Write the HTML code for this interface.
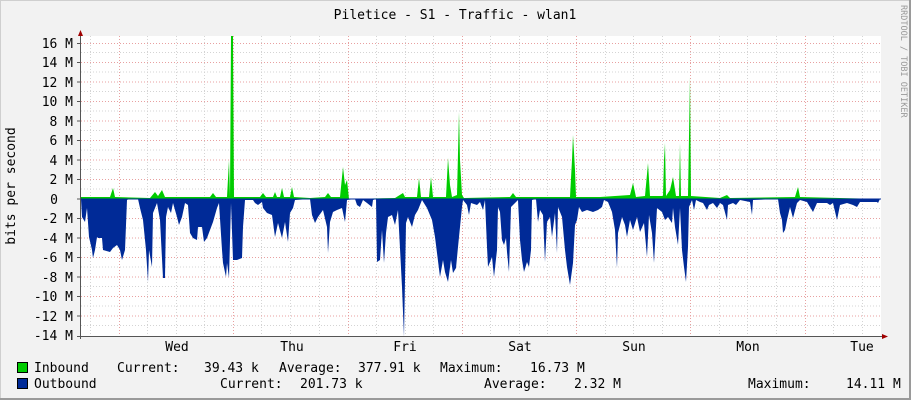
<!DOCTYPE html>
<html><head><meta charset="utf-8"><style>
html,body{margin:0;padding:0;background:#f2f2f2;}
svg{display:block;}
text{font-family:"DejaVu Sans Mono","Liberation Mono",monospace;fill:#000;}
</style></head><body>
<svg width="911" height="400" viewBox="0 0 911 400" xmlns="http://www.w3.org/2000/svg">
<rect x="0" y="0" width="911" height="400" fill="#f2f2f2"/>
<rect x="0.5" y="0.5" width="909" height="398" fill="none" stroke="#cfcfcf" stroke-width="1"/>
<line x1="910" y1="0" x2="910" y2="400" stroke="#9a9a9a" stroke-width="2"/>
<line x1="0" y1="399" x2="911" y2="399" stroke="#9a9a9a" stroke-width="2"/>
<rect x="81" y="36" width="800" height="300" fill="#fff"/>
<g stroke="#d4d4d4" stroke-width="1" stroke-dasharray="1,2">
<line x1="81" y1="52.5" x2="881" y2="52.5"/><line x1="81" y1="72" x2="881" y2="72"/><line x1="81" y1="91.5" x2="881" y2="91.5"/><line x1="81" y1="111" x2="881" y2="111"/><line x1="81" y1="130.5" x2="881" y2="130.5"/><line x1="81" y1="150" x2="881" y2="150"/><line x1="81" y1="169.5" x2="881" y2="169.5"/><line x1="81" y1="189" x2="881" y2="189"/><line x1="81" y1="208.5" x2="881" y2="208.5"/><line x1="81" y1="228" x2="881" y2="228"/><line x1="81" y1="247.5" x2="881" y2="247.5"/><line x1="81" y1="267" x2="881" y2="267"/><line x1="81" y1="286.5" x2="881" y2="286.5"/><line x1="81" y1="306" x2="881" y2="306"/><line x1="81" y1="325.5" x2="881" y2="325.5"/>
<line x1="90.5" y1="36" x2="90.5" y2="336"/><line x1="147.5" y1="36" x2="147.5" y2="336"/><line x1="176.5" y1="36" x2="176.5" y2="336"/><line x1="204.5" y1="36" x2="204.5" y2="336"/>
<line x1="261.5" y1="36" x2="261.5" y2="336"/><line x1="290.5" y1="36" x2="290.5" y2="336"/><line x1="319.5" y1="36" x2="319.5" y2="336"/>
<line x1="376.5" y1="36" x2="376.5" y2="336"/><line x1="405.5" y1="36" x2="405.5" y2="336"/><line x1="433.5" y1="36" x2="433.5" y2="336"/>
<line x1="490.5" y1="36" x2="490.5" y2="336"/><line x1="519.5" y1="36" x2="519.5" y2="336"/><line x1="547.5" y1="36" x2="547.5" y2="336"/>
<line x1="605.5" y1="36" x2="605.5" y2="336"/><line x1="633.5" y1="36" x2="633.5" y2="336"/><line x1="662.5" y1="36" x2="662.5" y2="336"/>
<line x1="719.5" y1="36" x2="719.5" y2="336"/><line x1="747.5" y1="36" x2="747.5" y2="336"/><line x1="776.5" y1="36" x2="776.5" y2="336"/>
<line x1="833.5" y1="36" x2="833.5" y2="336"/><line x1="862.5" y1="36" x2="862.5" y2="336"/>
</g>
<g stroke="#e8a0a0" stroke-width="1" stroke-dasharray="1,2">
<line x1="81" y1="43.5" x2="881" y2="43.5"/><line x1="81" y1="62.5" x2="881" y2="62.5"/><line x1="81" y1="82" x2="881" y2="82"/><line x1="81" y1="101.5" x2="881" y2="101.5"/><line x1="81" y1="121" x2="881" y2="121"/><line x1="81" y1="140.5" x2="881" y2="140.5"/><line x1="81" y1="160" x2="881" y2="160"/><line x1="81" y1="179.5" x2="881" y2="179.5"/><line x1="81" y1="218.5" x2="881" y2="218.5"/><line x1="81" y1="238" x2="881" y2="238"/><line x1="81" y1="257.5" x2="881" y2="257.5"/><line x1="81" y1="277" x2="881" y2="277"/><line x1="81" y1="296.5" x2="881" y2="296.5"/><line x1="81" y1="316" x2="881" y2="316"/>
<line x1="119.5" y1="36" x2="119.5" y2="336"/><line x1="233.5" y1="36" x2="233.5" y2="336"/><line x1="348.5" y1="36" x2="348.5" y2="336"/><line x1="462.5" y1="36" x2="462.5" y2="336"/><line x1="576.5" y1="36" x2="576.5" y2="336"/><line x1="690.5" y1="36" x2="690.5" y2="336"/><line x1="805.5" y1="36" x2="805.5" y2="336"/>
</g>
<polygon fill="#002a97" points="81,199 82,217 85,222 87,208 89,237 92,250 93,258 95,250 97,237 98,238 102,238 103,250 110,252 113,248 117,245 120,250 122,260 125,250 127,200 129,199 138,199 140,208 143,220 146,250 148,282 149,250 152,267 153,213 157,203 160,220 163,278 165,278 166,217 168,207 171,213 173,203 177,217 179,225 182,217 185,203 188,205 190,233 193,238 197,240 198,227 202,227 204,242 207,238 210,230 213,222 217,208 219,203 222,250 223,263 226,277 227,263 229,278 231,203 233,260 237,260 242,258 243,227 245,200 253,200 255,203 258,205 262,202 263,208 267,213 272,215 275,237 278,223 282,238 285,222 288,242 290,213 293,208 295,200 310,199 312,215 315,223 318,217 323,210 327,227 328,253 330,222 333,212 337,210 342,208 345,222 347,200 355,199 357,205 360,207 363,200 367,203 372,207 373,200 376,199 377,262 380,260 382,230 384,263 386,233 388,217 392,215 395,225 398,210 402,287 404,337 406,223 408,217 412,227 415,215 418,210 422,200 427,208 432,220 435,237 440,277 443,260 445,272 448,282 451,260 453,273 456,268 458,247 462,207 463,200 467,205 469,215 471,203 477,205 480,202 483,210 485,200 487,247 488,267 492,257 494,277 497,250 498,207 500,212 502,240 504,245 506,238 507,252 509,272 511,207 518,200 520,240 522,260 524,272 527,262 529,267 531,250 532,200 536,199 538,222 540,210 543,215 545,262 547,222 550,217 552,237 555,213 557,253 558,207 562,217 565,250 567,267 570,285 573,263 575,225 577,220 579,207 582,212 587,210 593,212 598,210 602,207 604,200 608,202 612,212 615,230 617,268 618,233 622,217 625,225 627,237 630,220 633,230 637,217 640,232 644,223 647,257 649,215 652,233 654,263 657,208 662,212 665,220 668,217 672,223 673,208 675,227 678,245 680,208 682,250 684,267 686,282 688,247 689,207 692,200 694,210 696,200 700,202 703,203 707,210 709,205 713,203 717,208 720,203 723,205 727,220 728,205 733,203 736,205 740,200 750,202 752,215 753,200 778,199 780,213 782,220 783,233 785,230 787,220 790,207 793,218 797,203 800,200 807,202 810,207 813,212 817,203 827,203 830,205 833,203 837,220 840,205 847,203 853,205 857,207 860,202 877,202 878,203 880,199"/>
<polygon fill="#00cc00" points="81,199 81,197 110,197 113,188 115,197 150,198 155,192 158,196 162,190 165,197 210,197 213,193 216,197 227,197 229,160 230,197 231,36 233,36 234,197 260,197 263,193 266,197 273,197 275,192 277,197 280,197 282,188 284,197 290,197 292,187 294,197 310,198 325,197 328,193 331,197 340,197 343,167 345,185 347,180 349,199 395,198 403,193 405,197 417,197 419,178 421,197 429,197 431,177 433,197 446,197 448,158 450,185 452,197 457,195 459,112 460,160 462,195 464,198 510,197 513,193 516,197 570,197 572,160 573,135 575,170 576,197 600,197 630,195 633,183 636,197 645,196 648,163 650,196 663,196 664,160 665,143 666,196 670,190 673,177 676,196 679,196 680,143 681,196 688,196 690,77 691,196 720,198 727,195 730,198 795,197 798,187 800,197 880,199"/>
<line x1="81" y1="199" x2="881" y2="199" stroke="#002a97" stroke-width="1"/>
<line x1="80.5" y1="32" x2="80.5" y2="339" stroke="#555" stroke-width="1"/>
<line x1="77" y1="336.5" x2="885" y2="336.5" stroke="#555" stroke-width="1"/>
<polygon points="78,36 83,36 80.5,30" fill="#a00000"/>
<polygon points="882,334 882,339 888,336.5" fill="#a00000"/>
<g stroke="#555"><line x1="77" y1="43.5" x2="81" y2="43.5"/><line x1="77" y1="62.5" x2="81" y2="62.5"/><line x1="77" y1="82" x2="81" y2="82"/><line x1="77" y1="101.5" x2="81" y2="101.5"/><line x1="77" y1="121" x2="81" y2="121"/><line x1="77" y1="140.5" x2="81" y2="140.5"/><line x1="77" y1="160" x2="81" y2="160"/><line x1="77" y1="179.5" x2="81" y2="179.5"/><line x1="77" y1="199" x2="81" y2="199"/><line x1="77" y1="218.5" x2="81" y2="218.5"/><line x1="77" y1="238" x2="81" y2="238"/><line x1="77" y1="257.5" x2="81" y2="257.5"/><line x1="77" y1="277" x2="81" y2="277"/><line x1="77" y1="296.5" x2="81" y2="296.5"/><line x1="77" y1="316" x2="81" y2="316"/></g>
<text x="455" y="19" font-size="13" text-anchor="middle">Piletice - S1 - Traffic - wlan1</text>
<g font-size="13" text-anchor="end">
<text x="73" y="48">16 M</text><text x="73" y="67">14 M</text><text x="73" y="87">12 M</text><text x="73" y="106">10 M</text><text x="73" y="126">8 M</text><text x="73" y="145">6 M</text><text x="73" y="165">4 M</text><text x="73" y="184">2 M</text><text x="58" y="204">0</text><text x="73" y="223">-2 M</text><text x="73" y="243">-4 M</text><text x="73" y="262">-6 M</text><text x="73" y="282">-8 M</text><text x="73" y="301">-10 M</text><text x="73" y="321">-12 M</text><text x="73" y="340">-14 M</text>
</g>
<text transform="translate(15,186) rotate(-90)" font-size="13" text-anchor="middle">bits per second</text>
<g font-size="13" text-anchor="middle">
<text x="177" y="351">Wed</text><text x="292" y="351">Thu</text><text x="405" y="351">Fri</text><text x="520" y="351">Sat</text><text x="634" y="351">Sun</text><text x="748" y="351">Mon</text><text x="862" y="351">Tue</text>
</g>
<text transform="translate(901,5) rotate(90)" font-size="8.5" style="fill:#999">RRDTOOL / TOBI OETIKER</text>
<rect x="17.5" y="362.5" width="10" height="10" fill="#00cc00" stroke="#000"/>
<rect x="17.5" y="378.5" width="10" height="10" fill="#002a97" stroke="#000"/>
<g font-size="13">
<text x="34" y="372">Inbound</text>
<text x="117" y="372">Current:</text>
<text x="204" y="372">39.43 k</text>
<text x="279" y="372">Average:</text>
<text x="358" y="372">377.91 k</text>
<text x="440" y="372">Maximum:</text>
<text x="530" y="372">16.73 M</text>
<text x="34" y="388">Outbound</text>
<text x="220" y="388">Current:</text>
<text x="300" y="388">201.73 k</text>
<text x="484" y="388">Average:</text>
<text x="574" y="388">2.32 M</text>
<text x="748" y="388">Maximum:</text>
<text x="846" y="388">14.11 M</text>
</g>
</svg>
</body></html>
